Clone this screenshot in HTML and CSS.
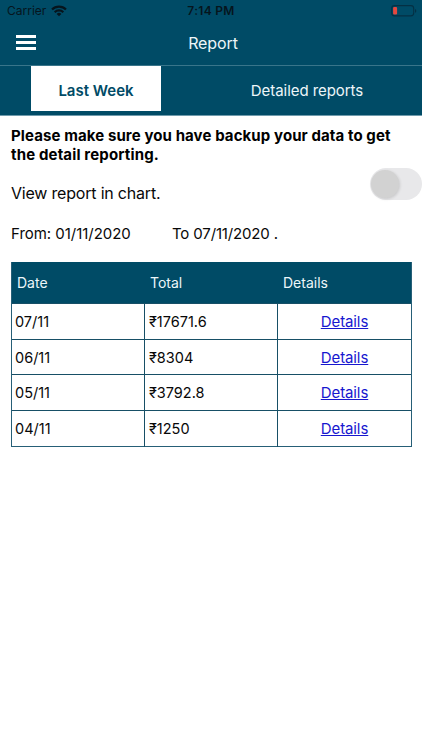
FILE: index.html
```html
<!DOCTYPE html>
<html lang="en">
<head>
<meta charset="utf-8">
<title>Report</title>
<link rel="stylesheet" href="styles.css">
</head>
<body>
<header class="top">
  <div class="status">
    <div class="status-left"><span class="carrier">Carrier</span>
      <svg class="wifi" width="16" height="12" viewBox="0 0 16 12"><g fill="none" stroke="#06151d" stroke-width="2.2"><path d="M1 4.5a9.8 9.8 0 0 1 14 0"/><path d="M3.7 7.2a6 6 0 0 1 8.6 0"/></g><path fill="#06151d" d="M8 11.3 5.6 9a3.4 3.4 0 0 1 4.8 0z"/></svg>
    </div>
    <span class="time">7:14 PM</span>
    <div class="status-right">
      <svg width="26" height="12" viewBox="0 0 26 12"><rect x=".7" y=".6" width="22" height="10.3" rx="2.8" fill="none" stroke="#043044" stroke-width="1.1"/><rect x="2.1" y="2" width="4" height="7.6" rx="1.1" fill="#e5483f"/><path d="M24 4v3.8q1.3-.5 1.3-1.9T24 4z" fill="#043044"/></svg>
    </div>
  </div>
  <nav class="nav">
    <div class="menu"><i></i><i></i><i></i></div>
    <h1 class="title">Report</h1>
    <div></div>
  </nav>
  <div class="tabs">
    <div class="tab active"><span class="t-week">Last Week</span></div>
    <div class="tab"><span class="t-detailed">Detailed reports</span></div>
  </div>
</header>
<main class="content">
  <p class="notice"><span class="n1">Please make sure you have backup your data to get</span><br><span class="n2">the detail reporting.</span></p>
  <div class="chart-row"><span class="chart-label">View report in chart.</span><div class="switch"><div class="knob"></div></div></div>
  <div class="range"><span class="from">From: 01/11/2020</span><span class="to">To 07/11/2020 .</span></div>
  <div class="table">
    <div class="row head"><span>Date</span><span>Total</span><span>Details</span></div>
    <div class="row"><span>07/11</span><span>₹17671.6</span><span><a href="#">Details</a></span></div>
    <div class="row"><span>06/11</span><span>₹8304</span><span><a href="#">Details</a></span></div>
    <div class="row"><span>05/11</span><span>₹3792.8</span><span><a href="#">Details</a></span></div>
    <div class="row"><span>04/11</span><span>₹1250</span><span><a href="#">Details</a></span></div>
  </div>
</main>
</body>
</html>
```
FILE: styles.css
```css
* { box-sizing: border-box; }
body { margin: 0; width: 422px; height: 750px; overflow: hidden; background: #fff; color: #080808; font-family: Inter, "Liberation Sans", sans-serif; }
.top { height: 116px; background: #004b66; border-bottom: 1px solid #6f9bac; }
.status { height: 22px; display: grid; grid-template-columns: 1fr auto 1fr; align-items: center; font-size: 12px; line-height: 22px; color: #06151d; }
.status-left { display: flex; align-items: center; gap: 5px; padding-left: 7px; }
.carrier { letter-spacing: 0; }
.time { font-weight: 600; letter-spacing: .3px; }
.status-right { display: flex; justify-content: flex-end; padding-right: 5px; }
.nav { height: 44px; border-bottom: 1px solid #39758a; display: grid; grid-template-columns: 1fr auto 1fr; align-items: center; color: #edf6f9; padding-left: 4px; }
.menu { width: 32px; padding-left: 12px; margin-top: -2px; display: flex; flex-direction: column; gap: 3px; }
.menu i { height: 3px; background: #fff; }
.title { margin: -2px 0 0; font-size: 16px; font-weight: 400; line-height: 20px; letter-spacing: -.1px; }
.tabs { height: 49px; display: flex; }
.tab { width: 230px; margin-left: 31px; height: 49px; font-size: 15px; line-height: 49px; text-align: center; color: #edf6f9; letter-spacing: -.06px; }
.tab.active { width: 130px; height: 45px; background: #fff; color: #004b66; font-weight: 600; letter-spacing: 0; }
.content { padding: 11px 11px 0; }
.notice { margin: 0; height: 38px; font-size: 15px; line-height: 18.5px; font-weight: 700; color: #000; white-space: nowrap; letter-spacing: .1px; }
.n2 { letter-spacing: .15px; }
.chart-row { height: 58px; display: flex; justify-content: space-between; margin-right: -11px; }
.chart-label { font-size: 16px; line-height: 57px; letter-spacing: -.2px; }
.switch { width: 52px; height: 32px; margin-top: 3px; border-radius: 16px; background: #e8e8ea; padding: 2px 1px; }
.knob { width: 28px; height: 28px; border-radius: 50%; background: #d2d2d2; box-shadow: 1px 1px 3px #0002; }
.range { height: 39px; display: flex; font-size: 15px; line-height: 21px; letter-spacing: -.03px; }
.from { width: 161px; }
.to { letter-spacing: -.15px; }
.table { width: 401px; border: 1px solid #265f77; border-top: 0; font-size: 14.5px; }
.row { height: 35.67px; display: grid; grid-template-columns: 133px 133px 133px; line-height: 36px; border-top: 1px solid #174f66; }
.row span { padding-left: 3px; }
.row span + span { border-left: 1px solid #174f66; margin-left: -1px; padding-left: 4px; }
.row span:last-child { text-align: center; padding: 0; }
.row a { font-size: 15px; color: #1717cf; text-decoration: underline; letter-spacing: -.1px; }
.row.head { height: 41px; border: 0; background: #004b66; color: #edf6f9; line-height: 41px; font-size: 14px; }
.row.head span { text-align: left; border: 0; margin: 0; padding-left: 5px; }
```
